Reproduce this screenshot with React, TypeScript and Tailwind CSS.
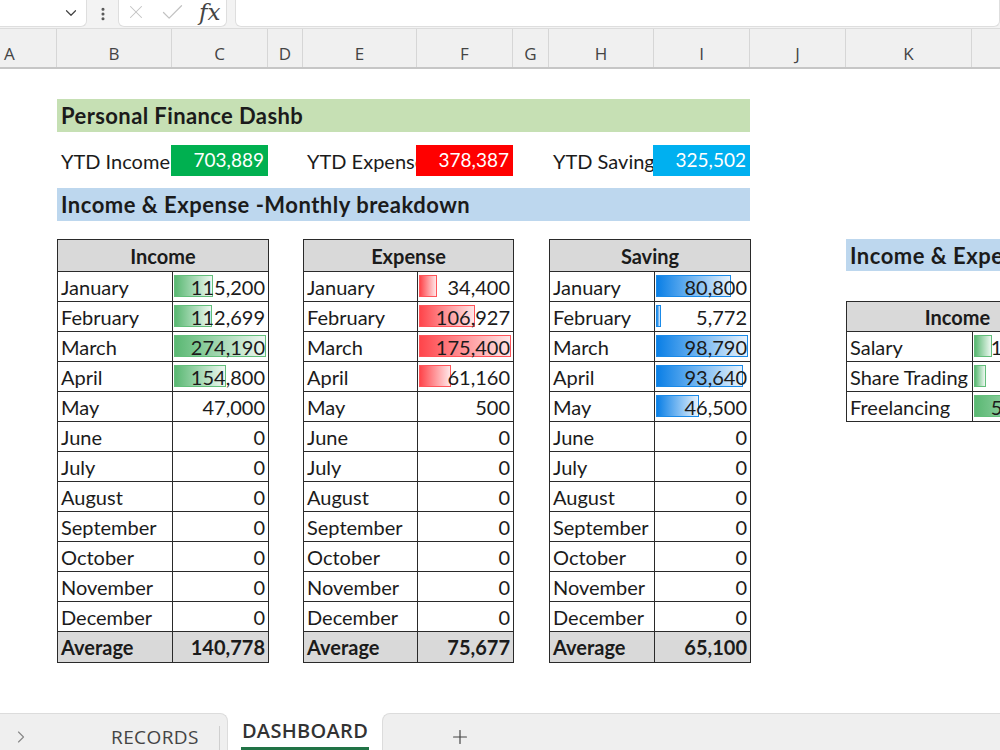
import { Check, ChevronDown, ChevronRight, EllipsisVertical, Plus, X } from 'lucide-react';

interface Row {
    label: string;
    value: number;
    bar?: number;
}

interface TableProps {
    title: string;
    labelW: string;
    width: string;
    headH: string;
    rows: Row[];
    average?: string;
    from: string;
    to: string;
    edge: string;
}

const months = [
    'January',
    'February',
    'March',
    'April',
    'May',
    'June',
    'July',
    'August',
    'September',
    'October',
    'November',
    'December',
];

const fmt = (n: number) => n.toLocaleString('en-US');

// data bars only cover the first few months, the rest of the range has none
function build(values: number[], bars: number): Row[] {
    const max = Math.max(...values);
    return months.map((label, i) => ({
        label,
        value: values[i] ?? 0,
        bar: i < bars ? Math.round((92 * values[i]) / max) : undefined,
    }));
}

const income = build([115200, 112699, 274190, 154800, 47000], 4);
const expense = build([34400, 106927, 175400, 61160, 500], 4);
const saving = build([80800, 5772, 98790, 93640, 46500], 5);

const categories: Row[] = [
    { label: 'Salary', value: 110400, bar: 18 },
    { label: 'Share Trading', value: 43489, bar: 12 },
    { label: 'Freelancing', value: 550000, bar: 90 },
];

const columns = [
    { name: 'A', w: 'w-[57px] justify-start pl-[4px]' },
    { name: 'B', w: 'w-[115px] justify-center' },
    { name: 'C', w: 'w-[96px] justify-center' },
    { name: 'D', w: 'w-[35px] justify-center' },
    { name: 'E', w: 'w-[114px] justify-center' },
    { name: 'F', w: 'w-[96px] justify-center' },
    { name: 'G', w: 'w-[36px] justify-center' },
    { name: 'H', w: 'w-[105px] justify-center' },
    { name: 'I', w: 'w-[96px] justify-center' },
    { name: 'J', w: 'w-[96px] justify-center' },
    { name: 'K', w: 'w-[126px] justify-center' },
    { name: 'L', w: 'w-[96px] justify-center' },
];

function DataBar({ width, from, to, edge }: { width: number; from: string; to: string; edge: string }) {
    return (
        <div
            className="absolute top-[3px] bottom-[4px] left-[1px] border"
            style={{ width, background: `linear-gradient(to right, ${from}, ${to})`, borderColor: edge }}
        />
    );
}

function SheetTable({ title, labelW, width, headH, rows, average, from, to, edge }: TableProps) {
    return (
        <div className={`${width} shrink-0 border-t border-l border-[#2a2a2a] text-[20px] leading-none text-[#1b1b1b]`}>
            <div className={`${headH} flex items-center justify-center border-r border-b border-[#2a2a2a] bg-[#d9d9d9] font-bold`}>{title}</div>
            {rows.map((row) => (
                <div key={row.label} className="flex h-[30px]">
                    <div className={`${labelW} flex shrink-0 items-center overflow-hidden border-r border-b border-[#2a2a2a] pl-[3px] whitespace-nowrap`}>
                        {row.label}
                    </div>
                    <div className="relative flex w-[96px] shrink-0 items-center justify-end border-r border-b border-[#2a2a2a] pr-[3px] whitespace-nowrap">
                        {row.bar !== undefined && <DataBar width={row.bar} from={from} to={to} edge={edge} />}
                        <span className="relative">{fmt(row.value)}</span>
                    </div>
                </div>
            ))}
            {average && (
                <div className="flex h-[31px] bg-[#d9d9d9] font-bold">
                    <div className={`${labelW} flex shrink-0 items-center border-r border-b border-[#2a2a2a] pl-[3px]`}>Average</div>
                    <div className="flex w-[96px] shrink-0 items-center justify-end border-r border-b border-[#2a2a2a] pr-[3px]">{average}</div>
                </div>
            )}
        </div>
    );
}

function Kpi({ label, labelW, value, color }: { label: string; labelW: string; value: string; color: string }) {
    return (
        <div className="flex h-[31px] shrink-0">
            <div className={`${labelW} flex items-center overflow-hidden pl-[4px] whitespace-nowrap`}>{label}</div>
            <div className={`${color} flex w-[97px] items-center justify-end pr-[4px] text-[19px] text-white`}>{value}</div>
        </div>
    );
}

const green = { from: '#5ab873', to: '#eef8f1', edge: '#63be7b' };
const red = { from: '#ff454b', to: '#ffe6e7', edge: '#ff555a' };
const blue = { from: '#0a7fe6', to: '#e6f2fd', edge: '#1a8ae8' };

export default function App() {
    return (
        <div className="flex h-[750px] w-[1000px] flex-col overflow-hidden bg-white font-['Lato',sans-serif] text-[#1b1b1b]">
            {/* formula bar */}
            <div className="flex h-[28px] shrink-0 items-start bg-[#f3f3f3]">
                <div className="-ml-[10px] flex h-[27px] w-[97px] items-center justify-end rounded-b-md border border-t-0 border-[#dedede] bg-white pr-[6px]">
                    <ChevronDown size={18} strokeWidth={1.6} className="text-[#444]" />
                </div>
                <div className="flex h-[27px] w-[31px] items-center justify-center">
                    <EllipsisVertical size={16} strokeWidth={2.6} className="text-[#555]" />
                </div>
                <div className="relative h-[27px] w-[109px] rounded-b-md border border-t-0 border-[#dedede] bg-white">
                    <X size={22} strokeWidth={1.1} className="absolute top-[1px] left-[6px] text-[#c2c2c2]" />
                    <Check size={27} strokeWidth={1.1} className="absolute -top-[1px] left-[40px] text-[#c2c2c2]" />
                    <span className="absolute top-[1px] left-[80px] font-['DejaVu_Serif',serif] text-[23px] leading-none text-[#444] italic">
                        fx
                    </span>
                </div>
                <div className="ml-[8px] h-[27px] flex-1 rounded-b-md border border-t-0 border-[#dedede] bg-white" />
            </div>

            {/* column letters */}
            <div className="flex h-[41px] shrink-0 border-t border-b-2 border-t-[#dcdcdc] border-b-[#c6c6c6] bg-[#f0f0f0]">
                {columns.map((c) => (
                    <div
                        key={c.name}
                        className={`${c.w} flex shrink-0 items-end border-r border-[#d6d6d6] pb-[5px] font-['Open_Sans',sans-serif] text-[17px] leading-none text-[#444]`}
                    >
                        {c.name}
                    </div>
                ))}
            </div>

            {/* sheet */}
            <div className="flex flex-1 pl-[57px] text-[20px]">
                <div className="flex w-[693px] shrink-0 flex-col">
                    <div className="mt-[30px] flex h-[33px] items-center bg-[#c6e0b4] pl-[4px] text-[22px] font-bold tracking-[0.4px]">
                        Personal Finance Dashb
                    </div>
                    <div className="mt-[13px] flex">
                        <Kpi label="YTD Income" labelW="w-[114px]" value="703,889" color="bg-[#00b050]" />
                        <div className="w-[35px] shrink-0" />
                        <Kpi label="YTD Expense" labelW="w-[113px]" value="378,387" color="bg-[#ff0000]" />
                        <div className="w-[36px] shrink-0" />
                        <Kpi label="YTD Saving" labelW="w-[104px]" value="325,502" color="bg-[#00b0f0]" />
                    </div>
                    <div className="mt-[12px] flex h-[33px] items-center bg-[#bdd7ee] pl-[4px] text-[22px] font-bold tracking-[0.5px]">
                        Income &amp; Expense -Monthly breakdown
                    </div>
                    <div className="mt-[18px] flex items-start">
                        <SheetTable title="Income" labelW="w-[115px]" width="w-[212px]" headH="h-[32px]" rows={income} average="140,778" {...green} />
                        <div className="w-[34px] shrink-0" />
                        <SheetTable title="Expense" labelW="w-[114px]" width="w-[211px]" headH="h-[32px]" rows={expense} average="75,677" {...red} />
                        <div className="w-[35px] shrink-0" />
                        <SheetTable title="Saving" labelW="w-[105px]" width="w-[202px]" headH="h-[32px]" rows={saving} average="65,100" {...blue} />
                    </div>
                </div>

                <div className="ml-[96px] flex shrink-0 flex-col">
                    <div className="mt-[170px] flex h-[32px] w-[260px] items-center bg-[#bdd7ee] pl-[4px] text-[22px] font-bold tracking-[0.5px] whitespace-nowrap">
                        Income &amp; Expense by Category
                    </div>
                    <div className="mt-[30px]">
                        <SheetTable title="Income" labelW="w-[126px]" width="w-[223px]" headH="h-[30px]" rows={categories} {...green} />
                    </div>
                </div>
            </div>

            {/* sheet tabs */}
            <div className="flex h-[37px] shrink-0 font-['Open_Sans',sans-serif] text-[19px]">
                <div className="flex w-[228px] shrink-0 items-center rounded-tr-lg border-t border-r border-[#dcdcdc] bg-[#efefef] pt-[10px]">
                    <ChevronRight size={20} strokeWidth={1.4} className="ml-[11px] text-[#888]" />
                    <span className="ml-[80px] leading-none tracking-[0.4px] text-[#444]">RECORDS</span>
                    <div className="ml-[20px] h-[24px] w-px self-end bg-[#cfcfcf]" />
                </div>
                <div className="flex w-[154px] shrink-0 flex-col items-center bg-white">
                    <span className="mt-[8px] text-[20px] leading-none font-semibold tracking-[0.3px] text-[#333]">DASHBOARD</span>
                    <div className="mt-auto h-[3px] w-[128px] bg-[#217346]" />
                </div>
                <div className="flex flex-1 items-center rounded-tl-lg border-t border-l border-[#dcdcdc] bg-[#efefef] pt-[10px]">
                    <Plus size={22} strokeWidth={1.3} className="ml-[66px] text-[#444]" />
                </div>
            </div>
        </div>
    );
}
